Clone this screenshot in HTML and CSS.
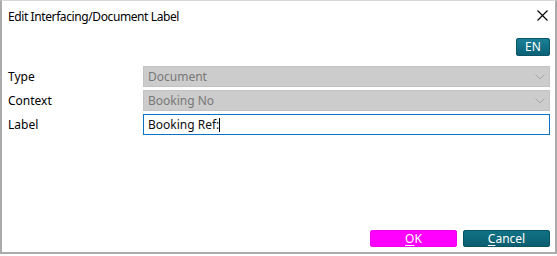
FILE: index.html
```html
<!DOCTYPE html>
<html lang="en">

<head>
  <meta charset="UTF-8" />
  <meta name="viewport" content="width=device-width, initial-scale=1.0" />
  <title>Edit Interfacing/Document Label</title>
  <link rel="stylesheet" href="styles.css">
</head>

<body>
  <div class="dialog">

    <div class="dialog-title">
      <span>Edit Interfacing/Document Label</span>
      <button class="close" title="Close">
        <svg width="11" height="11" viewBox="0 0 11 11">
          <path d="M0.5 0.5 L10.5 10.5 M10.5 0.5 L0.5 10.5" stroke="#000" stroke-width="1.1" fill="none" />
        </svg>
      </button>
    </div>

    <div class="dialog-tools">
      <button class="btn btn-lang">EN</button>
    </div>

    <div class="form">
      <label>Type</label>
      <div class="select">
        <span>Document</span>
        <svg class="chevron" width="10" height="6" viewBox="0 0 10 6">
          <path d="M0.5 0.5 L5 5 L9.5 0.5" stroke="#a8a8a8" fill="none" />
        </svg>
      </div>

      <label>Context</label>
      <div class="select">
        <span>Booking No</span>
        <svg class="chevron" width="10" height="6" viewBox="0 0 10 6">
          <path d="M0.5 0.5 L5 5 L9.5 0.5" stroke="#a8a8a8" fill="none" />
        </svg>
      </div>

      <label>Label</label>
      <div class="input">Booking Ref:<span class="caret"></span></div>
    </div>

    <div class="dialog-footer">
      <button class="btn btn-ok"><u>O</u>K</button>
      <button class="btn btn-cancel"><u>C</u>ancel</button>
    </div>

  </div>
</body>

</html>
```

FILE: styles.css
```css
* {
  box-sizing: border-box;
}

body {
  margin: 0;
  font-family: "Noto Sans", "Open Sans", sans-serif;
  font-size: 12px;
  color: #000;
  background: #fff;
}

.dialog {
  width: 557px;
  height: 254px;
  border: 2px solid #ababab;
  border-top: 1px solid #d8d8d8;
  display: flex;
  flex-direction: column;
  background: #fff;
}

.dialog-title {
  height: 30px;
  padding: 0 7px 0 6px;
  display: flex;
  align-items: center;
  justify-content: space-between;
  font-size: 12px;
  letter-spacing: -0.4px;
}

.close {
  appearance: none;
  border: none;
  background: none;
  padding: 0;
  width: 11px;
  height: 11px;
  display: block;
  margin-top: -1px;
}

.close svg {
  display: block;
}

.dialog-tools {
  display: flex;
  justify-content: flex-end;
  padding: 7px 5px 0 0;
}

.btn {
  appearance: none;
  border: none;
  color: #fff;
  font-family: inherit;
  font-size: 12px;
  border-radius: 3px;
  padding: 0;
  line-height: 16px;
  cursor: pointer;
}

.btn-lang {
  width: 34px;
  height: 18px;
  background: linear-gradient(#1a8299, #0b5f74);
  box-shadow: inset 0 0 0 1px #0a5568;
}

.form {
  display: grid;
  grid-template-columns: 135px 407px;
  row-gap: 3px;
  padding: 10px 0 0 6px;
  align-items: center;
}

.form label {
  font-size: 12px;
}

.select {
  height: 21px;
  background: #cccccc;
  border: 1px solid #c2c2c2;
  color: #787878;
  display: flex;
  align-items: center;
  justify-content: space-between;
  padding: 0 4px 0 4px;
}

.chevron {
  display: block;
  margin-top: 1px;
}

.input {
  height: 21px;
  border: 1px solid #0a74c9;
  background: #fff;
  color: #101010;
  display: flex;
  align-items: center;
  padding: 0 4px;
}

.caret {
  display: inline-block;
  width: 1px;
  height: 14px;
  background: #000;
}

.dialog-footer {
  margin-top: auto;
  display: flex;
  justify-content: flex-end;
  gap: 6px;
  padding: 0 5px 5px 0;
}

.btn-ok,
.btn-cancel {
  width: 87px;
  height: 17px;
}

.btn-ok {
  background: #ff00ff;
  box-shadow: inset 0 0 0 1px #f000f0;
}

.btn-cancel {
  background: linear-gradient(#107488, #0b5c6e);
  box-shadow: inset 0 0 0 1px #0a5364;
}

.btn u {
  text-underline-offset: 2px;
}
```
